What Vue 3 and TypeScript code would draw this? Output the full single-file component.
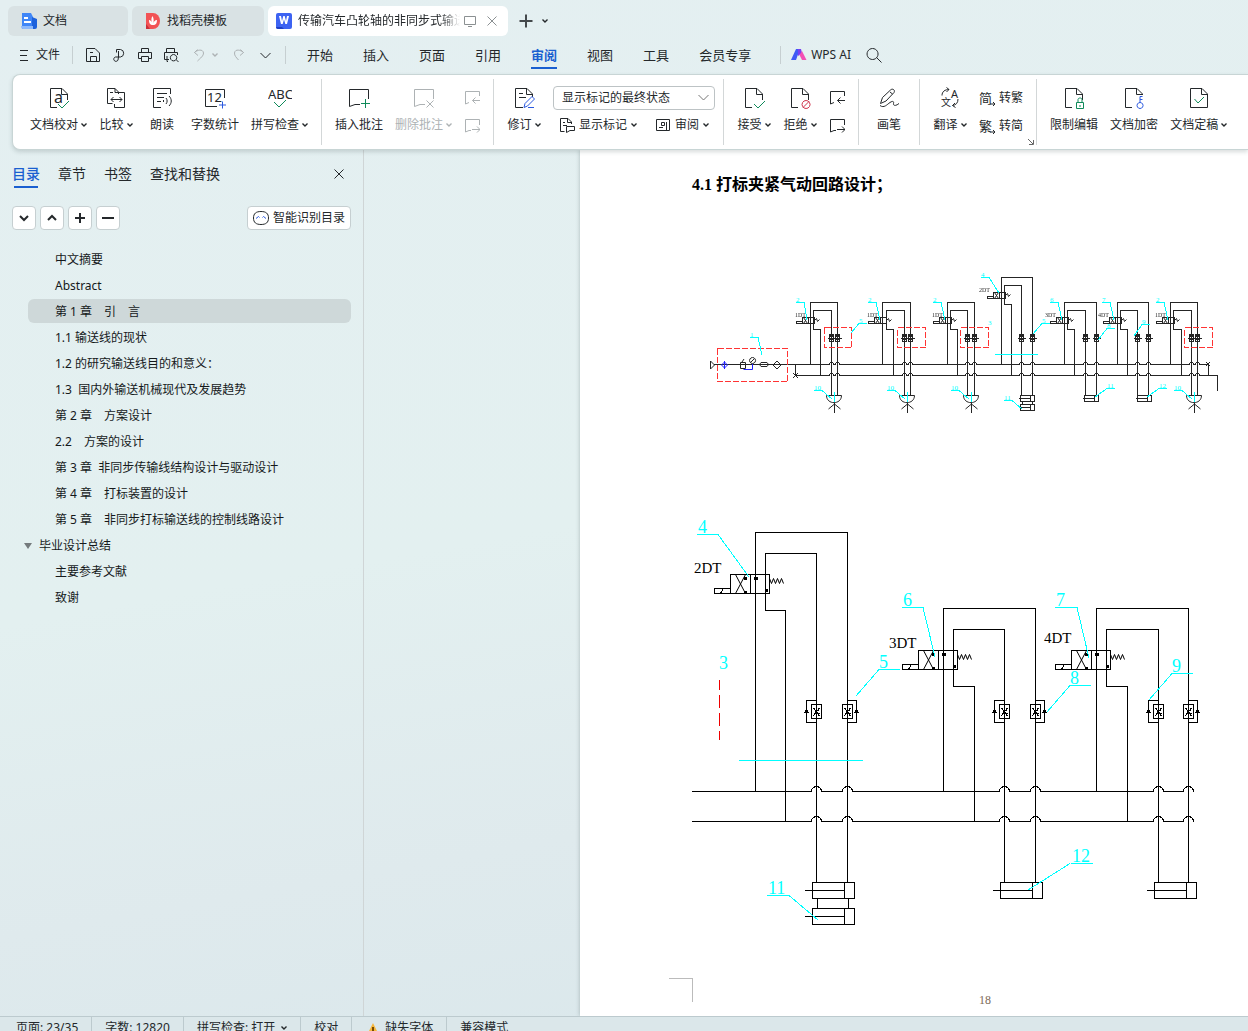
<script setup lang="ts">
import { h, ref } from 'vue'

interface Shape {
  d?: string
  text?: string
  x?: number
  y?: number
  size?: number
  color?: string
  fill?: string
  width?: number
}

const green = '#0f8a5a'
const blue = '#2b59e0'
const red = '#d0344c'
const doc = 'M10 21.5H3.5V2.5H15L20.5 8V14M14.5 2.5V8.5H20.5'

const icons: Record<string, Shape[]> = {
  proof: [{ d: doc }, { text: 'a', x: 7, y: 17, size: 16 }, { d: 'M11 18l4 4 7-7', color: green }],
  compare: [
    { d: 'M8.500 17.500H3.500V2.500H11L14.500 6V8M11 2.500V6.500H20.500V21.500H10.500V18' },
    { d: 'M6 6.500h3M7 13.500H18M9.500 11L7 13.500 9.500 16M15.500 11l2.500 2.500-2.500 2.500' },
  ],
  read: [
    { d: 'M11 21.500H3.500V2.500H20.500V8M7 7.500h10M7 11.500h7M7 15.500h4' },
    { d: 'M13.500 14v2M16 12c1.500 2 1.500 4 0 6M19 10c3 3 3 7 0 10' },
  ],
  count: [
    { d: 'M14 20.500H2.500V3.500H21.500V12' },
    { text: '12', x: 4, y: 16, size: 13 },
    { d: 'M19.500 15.500v7M16 19h7', color: blue },
  ],
  abc: [{ text: 'ABC', x: 0, y: 13, size: 13 }, { d: 'M6 16l5 5 7-7', color: green }],
  comment: [{ d: 'M13 18.500H8L2.500 20.500V3.500H21.500V13' }, { d: 'M18.500 13v9M14 17.500h9', color: green }],
  uncomment: [{ d: 'M13 18.500H8L2.500 20.500V3.500H21.500V13M14.500 14.500l7 7M21.500 14.500l-7 7' }],
  prev: [{ d: 'M5 12.500L1.500 14V1.500H15.500V6M16 10.500H8.500M11.500 7.500l-3 3 3 3' }],
  next: [{ d: 'M7 12.500H5L1.500 14V1.500H15.500V7M8 11.500H16M13 8.500l3 3-3 3' }],
  revise: [
    { d: 'M11 21.500H3.500V2.500H15L20.500 8V11M14.500 2.500V8.500H20.500M7 7.500h4M7 11.500h7' },
    { d: 'M12 21.500l1-4 7-7 2.500 2.500-7 7zM16 21.500h6', color: blue },
  ],
  marks: [
    { d: 'M5.500 14.500H1.500V1.500H9L12.500 5V7M8.500 1.500V5.500H12.500M4 5.500h2M4 8.500h4' },
    { d: 'M7.500 9.500H15.500V13.500H11L7.500 15.500z' },
  ],
  pane: [{ d: 'M1.500 2.500H14.500V13.500H1.500zM11.500 5V13.500M6.500 5.500h3v3h-3zM4 10.500h4' }],
  accept: [{ d: doc }, { d: 'M12 18l4 4 7-7', color: green }],
  reject: [{ d: doc }, { d: 'M18 14.500a4 4 0 1 0 .1 0zM15 21.500l6-6', color: red }],
  pen: [
    { d: 'M3.500 17.500l2-6L13.500 4c2-2 5 0 3.500 2.500L9 15zM13 6l2.500 2' },
    { d: 'M3 19.500c4 3 7-1 10-3s4-1 3.500 1 2 3 5.500 0' },
  ],
  translate: [
    { text: 'A', x: 13, y: 12, size: 11 },
    { text: '文', x: 3, y: 20, size: 10 },
    { d: 'M4 9.500c0-4 3-6 7-6M8.500 1.500l2.500 2-2.500 2.500M20 13c0 4-2 6-5.500 6.500M17 17l-2.500 2.500 3 2' },
  ],
  toFan: [{ text: '简', x: 0, y: 13, size: 13 }, { d: 'M11 14h5M14 12l2 2-2 2' }],
  toJian: [{ text: '繁', x: 0, y: 13, size: 13 }, { d: 'M11 14h5M14 12l2 2-2 2' }],
  lock: [{ d: doc }, { d: 'M14.500 16.500h7v6h-7zM16 16.500v-3c0-2 4-2 4 0v3M18 19v2', color: green }],
  key: [{ d: doc.replace('V14', 'V9') }, { d: 'M18 16.500a3 3 0 1 0 .1 0zM18 16.500v-6h2.500M18 13.500h2.500', color: blue }],
  final: [{ d: 'M3.500 2.500H15L20.500 8V21.500H3.500zM14.500 2.500V8.500H20.500' }, { d: 'M7.500 13l3.500 4 6-6', color: green }],
  menu: [{ d: 'M4 3.500h8M4 8.500h7M4 13.500h8' }],
  save: [{ d: 'M1.500 1.500H10L14.500 6V14.500H1.500zM5.500 14V9.500H11.500V14M5 5.500h3' }],
  share: [{ d: 'M5.500 5.500V2.500H9.500a3.800 3.800 0 0 1 0 7.500H7.500V4M7.500 10H4.500a2.200 2.200 0 1 0 2.500 3l.500-3' }],
  print: [{ d: 'M4.500 5V1.500H11.500V5M4.500 11.500H1.500V5.500H14.500V11.500H11.500M4.500 9.500H11.500V14.500H4.500z' }],
  preview: [
    { d: 'M3.500 5V1.500H11.500V5M6 12.500H1.500V5.500H14.500V8M5 14.500H4V9' },
    { d: 'M10.500 7.500a3.200 3.200 0 1 0 .1 0zM13 12.500l2.500 2.500' },
  ],
  undo: [{ d: 'M6.500 2.500L3.500 5.500l3.500 3M3.500 5.500C6 3 12 1.500 12.500 6c0 3-3 5-6 8' }],
  redo: [{ d: 'M9.500 2.500l3 3-3.500 3M12.500 5.500C10 3 4 1.500 3.500 6c0 3 1.500 4 4 7' }],
  down: [{ d: 'M3.500 6l5 5 5-5' }],
  search: [{ d: 'M6.500 1.500a5.500 5.500 0 1 0 .1 0zM10.500 10.500l5 5' }],
  monitor: [{ d: 'M2.500 3.500H13.500V11.500H2.500zM6 13.500H10' }],
  close: [{ d: 'M3.500 3.500l9 9M12.500 3.500l-9 9' }],
  plus: [{ d: 'M8 1.500v13M1.500 8h13', width: 2 }],
  treeDown: [{ d: 'M4 6l4 4 4-4', width: 2 }],
  treeUp: [{ d: 'M4 10l4-4 4 4', width: 2 }],
  treePlus: [{ d: 'M8 3v10M3 8h10', width: 2 }],
  treeMinus: [{ d: 'M2 8h12', width: 2 }],
  smart: [
    { d: 'M8 1.500c5 0 7.500 2 7.500 6.500S13 14.500 8 14.500.500 12.500.500 8 3 1.500 8 1.500z' },
    { d: 'M3 8.500l2.500-2 1 1M9.500 7.500l1-1 2.500 2', color: blue },
  ],
  docs: [
    { d: 'M1 0H10L12 4V16H1z', fill: '#3f86f7', color: 'none' },
    { d: 'M11 4l5 2V14q0 2-2 2H11z', fill: '#1d62dc', color: 'none' },
    { d: 'M0 13H12V16H2q-2 0-2-3z', fill: '#8db9fb', color: 'none' },
    { d: 'M3 5h4M3 9h7', color: '#fff', width: 2 },
  ],
  docer: [
    { d: 'M1 0H8a7 8 0 0 1 0 16H4L1 13z', fill: '#f25355', color: 'none' },
    { d: 'M1 11l4 5H1z', fill: '#c92f39', color: 'none' },
    { d: 'M4 7c0 3 1 5 4 5s4-2 4-5c-2 0-3 1-4 4 1-3 1-5-.500-8C6 5 6 8 7.500 11 6.500 8 5.500 7 4 7z', fill: '#fff', color: 'none' },
  ],
  writer: [
    { d: 'M2 0H14q2 0 2 2V14q0 2-2 2H2q-2 0-2-2V2q0-2 2-2z', fill: '#3d63f2', color: 'none' },
    { d: 'M0 14H6L8 16H2q-2 0-2-2z', fill: '#1e3fc4', color: 'none' },
    { d: 'M3 3H5L6 8 7.300 3H8.700L10 8 11 3H13L11 11H9.300L8 6.500 6.700 11H5z', fill: '#fff', color: 'none' },
  ],
  ai: [
    { d: 'M5 2H9L5 13H0z', fill: '#3f5af5', color: 'none' },
    { d: 'M7 2H10L11 6 7 9z', fill: '#7b3ff0', color: 'none' },
    { d: 'M11 4l4.500 9H11L8.500 8z', fill: '#f34fb4', color: 'none' },
  ],
  warn: [
    { d: 'M8 3l6 12H2z', fill: '#f6b73c', color: 'none' },
    { d: 'M8 7v4M8 12v1', color: '#7a4a00', width: 2 },
  ],
  corner: [{ d: 'M1 1l5 5M6.500 2V6.500H2' }],
}

const Icon = (props: { name: string; size?: number }) => {
  const s = props.size ?? 16
  return h(
    'svg',
    { width: s, height: s, viewBox: `0 0 ${s} ${s}`, fill: 'none', 'aria-hidden': 'true', style: { flex: 'none', display: 'block' } },
    icons[props.name].map((p) =>
      p.d
        ? h('path', { d: p.d, stroke: p.color ?? 'currentColor', fill: p.fill ?? 'none', 'stroke-width': p.width ?? 1 })
        : h('text', { x: p.x, y: p.y, 'font-size': p.size, fill: 'currentColor' }, p.text),
    ),
  )
}
Icon.props = ['name', 'size']

const Chev = () =>
  h('svg', { width: 6, height: 6, viewBox: '0 0 6 6', fill: 'none', 'aria-hidden': 'true', style: { flex: 'none' } }, [
    h('path', { d: 'M.5 1.500l2.500 2.500L5.500 1.500', stroke: 'currentColor', 'stroke-width': 1.4 }),
  ])

const menus = ['开始', '插入', '页面', '引用', '审阅', '视图', '工具', '会员专享']
const activeMenu = ref('审阅')

interface Tool { icon: string; label: string; drop?: boolean; off?: boolean }
const proofTools: Tool[] = [
  { icon: 'proof', label: '文档校对', drop: true },
  { icon: 'compare', label: '比较', drop: true },
  { icon: 'read', label: '朗读' },
  { icon: 'count', label: '字数统计' },
  { icon: 'abc', label: '拼写检查', drop: true },
]
const commentTools: Tool[] = [
  { icon: 'comment', label: '插入批注' },
  { icon: 'uncomment', label: '删除批注', drop: true, off: true },
]
const changeTools: Tool[] = [
  { icon: 'accept', label: '接受', drop: true },
  { icon: 'reject', label: '拒绝', drop: true },
]
const protectTools: Tool[] = [
  { icon: 'lock', label: '限制编辑' },
  { icon: 'key', label: '文档加密' },
  { icon: 'final', label: '文档定稿', drop: true },
]

const panes = ['目录', '章节', '书签', '查找和替换']
const activePane = ref('目录')
const treeTools = [
  { icon: 'treeDown', label: '展开' },
  { icon: 'treeUp', label: '收起' },
  { icon: 'treePlus', label: '添加' },
  { icon: 'treeMinus', label: '移除' },
]
const outline = [
  '中文摘要',
  'Abstract',
  '第 1 章　引　言',
  '1.1 输送线的现状',
  '1.2 的研究输送线目的和意义：',
  '1.3  国内外输送机械现代及发展趋势',
  '第 2 章　方案设计',
  '2.2　方案的设计',
  '第 3 章  非同步传输线结构设计与驱动设计',
  '第 4 章　打标装置的设计',
  '第 5 章　非同步打标输送线的控制线路设计',
  '毕业设计总结',
  '主要参考文献',
  '致谢',
]
const selected = ref(2)
const parentRow = 11

/* Enlarged circuit: one entry per directional valve branch */
const branches = [
  { x: 755.5, top: 532.5, inner: 61, back: 20, label: '2DT', lx: 694, ly: 573 },
  { x: 943.5, top: 608.5, inner: 61, back: 21, label: '3DT', lx: 889, ly: 648 },
  { x: 1096.5, top: 608.5, inner: 62, back: 21, label: '4DT', lx: 1044, ly: 643 },
]
const cylinders = [
  [812.5, 882.5], [812.5, 908.5], [1000.5, 882.5], [1154.5, 882.5],
]
const leaders = [
  { n: '4', x: 698, y: 534.5, end: '749 577', from: 718 },
  { n: '5', x: 879, y: 669.5, end: '856 696', from: 879 },
  { n: '6', x: 903, y: 607.5, end: '935 657', from: 923 },
  { n: '7', x: 1056, y: 607.5, end: '1089 658', from: 1077 },
  { n: '8', x: 1070, y: 685.5, end: '1047 712', from: 1070 },
  { n: '9', x: 1172, y: 673.5, end: '1149 700', from: 1172 },
  { n: '11', x: 768, y: 895.5, end: '818 920', from: 789 },
  { n: '12', x: 1072, y: 863.5, end: '1028 890', from: 1070 },
]
const hops = [816.5, 847.5, 1004.5, 1035.5, 1158.5, 1188.5]
const bus = (y: number) => `M692 ${y}` + hops.map((x) => `H${x - 5}a5 5 0 0 1 10 0`).join('')

/* Overview circuit: outer pair, inner pair, return pipe, label position */
const small = [
  { a: 810.5, b: 837.5, c: 813.5, d: 831.5, e: 820.5, t: 302.5, label: '1DT', lx: 795 },
  { a: 882.5, b: 910.5, c: 886.5, d: 904.5, e: 893.5, t: 302.5, label: '1DT', lx: 867 },
  { a: 947.5, b: 974.5, c: 950.5, d: 967.5, e: 957.5, t: 302.5, label: '1DT', lx: 932 },
  { a: 1001.5, b: 1032.5, c: 1004.5, d: 1021.5, e: 1011.5, t: 277.5, label: '2DT', lx: 979 },
  { a: 1064.5, b: 1096.5, c: 1067.5, d: 1085.5, e: 1074.5, t: 302.5, label: '3DT', lx: 1045 },
  { a: 1117.5, b: 1148.5, c: 1120.5, d: 1137.5, e: 1127.5, t: 302.5, label: '4DT', lx: 1098 },
  { a: 1170.5, b: 1197.5, c: 1173.5, d: 1191.5, e: 1181.5, t: 302.5, label: '1DT', lx: 1155 },
]
const smallHops = small.flatMap((u) => [u.d, u.b])
const smallBus = (y: number, from: number, to: number) =>
  `M${from} ${y}` + smallHops.map((x) => `H${x - 2}a2 2 0 0 1 4 0`).join('') + `H${to}`
const cups = [834.5, 907.5, 971.5, 1194.5]
const dashed = [
  [717.5, 348.5, 70, 33], [824.5, 327.5, 27, 20], [897.5, 327.5, 28, 20], [960.5, 327.5, 28, 20], [1184.5, 327.5, 28, 20],
]
const smallCylinders = [[1020.5, 395.5], [1020.5, 404.5], [1084.5, 395.5], [1137.5, 395.5]]
const smallLeaders = [
  { n: '1', x: 750, y: 337.5, end: '762 355', right: true },
  { n: '2', x: 796, y: 302.5, end: '807 320', right: true },
  { n: '2', x: 868, y: 302.5, end: '880 320', right: true },
  { n: '2', x: 933, y: 302.5, end: '945 320', right: true },
  { n: '4', x: 981, y: 277.5, end: '999 293', right: true },
  { n: '6', x: 1050, y: 302.5, end: '1062 320', right: true },
  { n: '7', x: 1102, y: 302.5, end: '1114 320', right: true },
  { n: '2', x: 1156, y: 302.5, end: '1168 320', right: true },
  { n: '5', x: 859, y: 323.5, end: '851 333', right: false },
  { n: '5', x: 1042, y: 323.5, end: '1033 334', right: false },
  { n: '8', x: 1107, y: 328.5, end: '1098 340', right: false },
  { n: '9', x: 1142, y: 324.5, end: '1134 336', right: false },
  { n: '10', x: 814, y: 390.5, end: '832 399', right: true },
  { n: '10', x: 887, y: 390.5, end: '905 399', right: true },
  { n: '10', x: 951, y: 390.5, end: '969 399', right: true },
  { n: '11', x: 1004, y: 400.5, end: '1022 409', right: true },
  { n: '11', x: 1107, y: 388.5, end: '1095 397', right: false },
  { n: '12', x: 1159, y: 388.5, end: '1147 397', right: false },
  { n: '10', x: 1174, y: 390.5, end: '1192 399', right: true },
]
</script>

<template>
  <div class="app">
    <nav class="tabs" aria-label="文档标签">
      <button class="tab home"><Icon name="docs" />文档</button>
      <button class="tab store"><Icon name="docer" />找稻壳模板</button>
      <div class="tab current">
        <Icon name="writer" />
        <span class="title">传输汽车凸轮轴的非同步式输送</span>
        <Icon name="monitor" class="dim" />
        <button class="bare dim" aria-label="关闭标签"><Icon name="close" /></button>
      </div>
      <button class="bare new" aria-label="新建"><Icon name="plus" /></button>
      <button class="bare" aria-label="标签列表"><Chev /></button>
    </nav>

    <div class="menubar">
      <button class="bare file"><Icon name="menu" />文件</button>
      <i class="rule"></i>
      <div class="quick">
        <button class="bare" aria-label="保存"><Icon name="save" /></button>
        <button class="bare" aria-label="分享"><Icon name="share" /></button>
        <button class="bare" aria-label="打印"><Icon name="print" /></button>
        <button class="bare" aria-label="打印预览"><Icon name="preview" /></button>
        <button class="bare off undo" aria-label="撤销"><Icon name="undo" /><Chev /></button>
        <button class="bare off redo" aria-label="恢复"><Icon name="redo" /></button>
        <button class="bare" aria-label="更多"><Icon name="down" /></button>
      </div>
      <i class="rule"></i>
      <div class="menus">
        <button v-for="m in menus" :key="m" class="bare menu" :class="{ on: m === activeMenu }" @click="activeMenu = m">{{ m }}</button>
      </div>
      <i class="rule"></i>
      <button class="bare ai"><Icon name="ai" />WPS AI</button>
      <button class="bare" aria-label="搜索"><Icon name="search" /></button>
    </div>

    <section class="ribbon" aria-label="审阅">
      <button v-for="t in proofTools" :key="t.label" class="tool">
        <Icon :name="t.icon" :size="24" /><span>{{ t.label }}<Chev v-if="t.drop" /></span>
      </button>
      <i class="sep"></i>
      <button v-for="t in commentTools" :key="t.label" class="tool" :class="{ off: t.off }">
        <Icon :name="t.icon" :size="24" /><span>{{ t.label }}<Chev v-if="t.drop" /></span>
      </button>
      <div class="stack off">
        <button class="bare" aria-label="上一条批注"><Icon name="prev" /></button>
        <button class="bare" aria-label="下一条批注"><Icon name="next" /></button>
      </div>
      <i class="sep"></i>
      <button class="tool"><Icon name="revise" :size="24" /><span>修订<Chev /></span></button>
      <div class="marking">
        <div class="picker">
          <select aria-label="修订显示状态"><option>显示标记的最终状态</option></select>
          <Icon name="down" class="arrow" />
        </div>
        <div class="line">
          <button class="bare mini"><Icon name="marks" />显示标记<Chev /></button>
          <button class="bare mini"><Icon name="pane" />审阅<Chev /></button>
        </div>
      </div>
      <i class="sep near"></i>
      <button v-for="t in changeTools" :key="t.label" class="tool">
        <Icon :name="t.icon" :size="24" /><span>{{ t.label }}<Chev v-if="t.drop" /></span>
      </button>
      <div class="stack">
        <button class="bare" aria-label="上一条修订"><Icon name="prev" /></button>
        <button class="bare" aria-label="下一条修订"><Icon name="next" /></button>
      </div>
      <i class="sep"></i>
      <button class="tool"><Icon name="pen" :size="24" /><span>画笔</span></button>
      <i class="sep"></i>
      <button class="tool"><Icon name="translate" :size="24" /><span>翻译<Chev /></span></button>
      <div class="stack convert">
        <button class="bare"><Icon name="toFan" />转繁</button>
        <button class="bare"><Icon name="toJian" />转简</button>
        <button class="bare launcher" aria-label="更多选项"><Icon name="corner" :size="8" /></button>
      </div>
      <i class="sep"></i>
      <button v-for="t in protectTools" :key="t.label" class="tool">
        <Icon :name="t.icon" :size="24" /><span>{{ t.label }}<Chev v-if="t.drop" /></span>
      </button>
    </section>

    <main class="work">
      <aside class="side">
        <div class="panes">
          <button v-for="p in panes" :key="p" class="bare pane" :class="{ on: p === activePane }" @click="activePane = p">{{ p }}</button>
          <button class="bare shut" aria-label="关闭窗格"><Icon name="close" /></button>
        </div>
        <div class="treebar">
          <button v-for="t in treeTools" :key="t.icon" class="box" :aria-label="t.label"><Icon :name="t.icon" /></button>
          <button class="box smart"><Icon name="smart" />智能识别目录</button>
        </div>
        <ul class="tree">
          <li v-for="(item, i) in outline" :key="i">
            <button class="node" :class="{ on: i === selected, parent: i === parentRow }" @click="selected = i">
              <i v-if="i === parentRow" class="twist"></i>{{ item }}
            </button>
          </li>
        </ul>
      </aside>

      <div class="canvas">
        <article class="sheet">
          <h1>4.1 打标夹紧气动回路设计；</h1>

          <svg class="plan overview" viewBox="708 272 512 144" width="512" height="144" role="img" aria-label="气动回路总图">
            <g class="ink">
              <path :d="smallBus(364.5, 714, 1208)" />
              <path :d="smallBus(375.5, 796, 1217.5) + 'V391'" />
              <path d="M795.500 364V375M793 373l5 5M798 373l-5 5M1208 364V375M1206 362l4 4M1210 362l-4 4" />
              <path d="M710.500 361v8l4-4zM777 361l4 4-4 4-4-4zM761 362.500h6q3 2 0 4h-6q-3-2 0-4zM740.500 362.500h5v6h-5zM742 362l2-3M752.500 357.500a3 3 0 1 0 .1 0zM751 362l3-3" class="soft" />
              <g v-for="u in small" :key="u.a">
                <path :d="`M${u.a} 364V${u.t}H${u.b}V396M${u.c} ${u.t + 27}V${u.t + 8}H${u.d}V396M${u.c} ${u.t + 27}H${u.e}V375`" />
                <path :d="`M${u.a - 8} ${u.t + 15}h12v6h-12zM${u.a - 2} ${u.t + 15}v6M${u.a - 14} ${u.t + 19}h6v2h-6z`" />
                <path class="soft" :d="`M${u.a - 7} ${u.t + 15}l4 6M${u.a - 3} ${u.t + 15}l-4 6M${u.a + 4} ${u.t + 18}l2-2 1 3 2-2`" />
                <path v-for="v in [u.d, u.b]" :key="v" :d="`M${v - 2} 334h4v7h-4zM${v - 2} 335l4 5M${v + 2} 335l-4 5M${v - 4} 338h8`" />
                <text :x="u.lx" :y="u.t + 14" font-size="6">{{ u.label }}</text>
              </g>
              <path v-for="c in cups" :key="c" class="soft" :d="`M${c - 8} 395.500H${c + 7}C${c + 7} 405 ${c - 8} 405 ${c - 8} 395.500M${c} 403V413M${c} 404l-6 5M${c} 404l6 5`" />
              <path v-for="(c, i) in smallCylinders" :key="i" :d="`M${c[0]} ${c[1]}h14v6h-14zM${c[0] + 10} ${c[1]}v6M${c[0] - 2} ${c[1] + 3}h12`" />
              <path d="M1022.500 401V405M1032.500 401V405" />
            </g>
            <path class="navy" d="M743.500 369.500H752.500V364M724.500 361V369M721.500 365l3-3 3 3-3 3z" />
            <rect v-for="(r, i) in dashed" :key="i" class="dash" :x="r[0]" :y="r[1]" :width="r[2]" :height="r[3]" />
            <g class="aqua">
              <path d="M995 354.500H1038" />
              <path v-for="c in cups" :key="c" :d="`M${c} 392V402`" />
              <g v-for="(l, i) in smallLeaders" :key="i">
                <path :d="`M${l.x} ${l.y}h8M${l.right ? l.x + 8 : l.x} ${l.y}L${l.end}`" />
                <text :x="l.x" :y="l.y - 1" font-size="7">{{ l.n }}</text>
              </g>
              <text x="988" y="325" font-size="7">3</text>
            </g>
          </svg>

          <svg class="plan detail" viewBox="692 516 512 412" width="512" height="412" role="img" aria-label="气动回路局部放大图">
            <g class="ink">
              <path :d="bus(791.5)" />
              <path :d="bus(821.5)" />
              <g v-for="b in branches" :key="b.x">
                <path :d="`M${b.x} 791V${b.top}h92V882M${b.x + 10} ${b.top + 78}V${b.top + 21}h${b.inner - 10}V882M${b.x + 10} ${b.top + 78}h${b.back}V821`" />
                <path :d="`M${b.x - 25} ${b.top + 42}h39v19h-39zM${b.x - 5} ${b.top + 42}v19`" />
                <path :d="`M${b.x - 41} ${b.top + 56}h16v5h-16zM${b.x - 35} ${b.top + 61}l3-5`" />
                <path class="soft" :d="`M${b.x - 20} ${b.top + 42}l10 19M${b.x - 10} ${b.top + 42}l-10 19M${b.x + 14} ${b.top + 46}l2 5 2-5 2 5 2-5 2 5 2-5 2 5`" />
                <path class="mark" :d="`M${b.x - 2} ${b.top + 44}h4v3h-4zM${b.x + 9} ${b.top + 56}h3v3h-3zM${b.x - 12} ${b.top + 44}h3v3h-3zM${b.x - 12} ${b.top + 58}h3v3h-3z`" />
                <path :d="`M${b.x + b.inner} 700.500h-10v22h10M${b.x + 92} 700.500h9v22h-9`" />
                <path v-for="v in [b.x + b.inner, b.x + 92]" :key="v" :d="`M${v - 5} 704.500h10v14h-10zM${v - 3} 708l6 8M${v + 3} 708l-6 8M${v - 3} 713h6M${v - 2} 710h4`" />
                <path class="mark" :d="`M${b.x + b.inner - 13} 713l3-4 3 4zM${b.x + 98} 713l3-4 3 4z`" />
                <text :x="b.lx" :y="b.ly" font-size="15">{{ b.label }}</text>
              </g>
              <path v-for="(c, i) in cylinders" :key="i" :d="`M${c[0]} ${c[1]}h42v16h-42zM${c[0] + 32} ${c[1]}v16M${c[0] - 8} ${c[1] + 8}h40`" />
              <path d="M817.500 898V908M848.500 898V908" />
            </g>
            <path class="alert" d="M719.500 680V690M719.500 695V708M719.500 713V726M719.500 731V740" />
            <g class="aqua">
              <path d="M739 760.500H863" />
              <g v-for="l in leaders" :key="l.n">
                <path :d="`M${l.x - 1} ${l.y}h22M${l.from} ${l.y}L${l.end}`" />
                <text :x="l.x" :y="l.y - 2" font-size="18">{{ l.n }}</text>
              </g>
              <text x="719" y="669" font-size="18">3</text>
            </g>
          </svg>

          <footer class="foot"><i class="crop"></i><span>18</span></footer>
        </article>
      </div>
    </main>

    <footer class="status">
      <span>页面: 23/35</span>
      <span>字数: 12820</span>
      <button class="bare">拼写检查: 打开<Chev /></button>
      <button class="bare">校对</button>
      <button class="bare missing"><Icon name="warn" />缺失字体</button>
      <span>兼容模式</span>
    </footer>
  </div>
</template>

<style>
body { margin: 0; }
</style>

<style scoped>
.app {
  display: flex;
  flex-direction: column;
  height: 100vh;
  overflow: hidden;
  background: linear-gradient(170deg, #e4eff1 0%, #e3f0f0 50%, #dfeaed 75%, #d9e7eb 100%);
  color: #24282b;
  font: 12px/16px "Noto Sans", "Noto Sans CJK SC", sans-serif;
}
button, select { font: inherit; color: inherit; margin: 0; }
.bare {
  display: flex;
  align-items: center;
  flex: none;
  padding: 0;
  border: 0;
  background: none;
  white-space: nowrap;
}
.off { color: #adb2b4; }
.dim { color: #8b9092; }

.tabs { display: flex; align-items: center; gap: 4px; height: 30px; padding: 6px 8px 5px; flex: none; }
.tab {
  display: flex;
  align-items: center;
  gap: 6px;
  box-sizing: border-box;
  height: 30px;
  padding: 0 13px;
  border: 0;
  border-radius: 6px;
  background: #d9e2e4;
}
.home { width: 120px; }
.store { width: 132px; }
.current { width: 240px; padding: 0 8px; background: #fff; }
.title {
  flex: 1;
  margin-right: -4px;
  overflow: hidden;
  white-space: nowrap;
  mask-image: linear-gradient(to right, #000 88%, transparent);
}
.new { margin: 0 4px 0 6px; color: #44494c; }

.menubar { display: flex; align-items: center; height: 28px; padding: 0 16px; margin-bottom: 5px; flex: none; }
.file { gap: 4px; }
.rule { width: 1px; height: 18px; margin: 0 12px; background: #c6cfd1; flex: none; }
.quick { display: flex; align-items: center; gap: 10px; }
.undo { gap: 5px; padding-left: 2px; }
.redo { padding-left: 3px; }
.menus { display: flex; gap: 30px; padding: 0 17px 0 9px; }
.menu { position: relative; height: 28px; font-size: 13px; line-height: 28px; }
.menu.on { color: #1a5fd0; font-weight: 700; }
.menu.on::after {
  content: "";
  position: absolute;
  left: 0;
  right: 0;
  bottom: 0;
  height: 2px;
  background: #1a5fd0;
}
.ai { gap: 4px; margin: 0 15px 0 -2px; }

.ribbon {
  position: relative;
  z-index: 1;
  display: flex;
  align-items: flex-start;
  gap: 12px;
  flex: none;
  box-sizing: border-box;
  height: 76px;
  margin-left: 12px;
  padding: 11px 0 0 17px;
  border: 1px solid #c8d5d5;
  border-right: 0;
  border-radius: 8px 0 0 8px;
  background: #fff;
  box-shadow: 0 2px 4px rgba(60, 80, 80, .2);
}
.tool {
  display: flex;
  flex-direction: column;
  align-items: center;
  gap: 7px;
  min-width: 34px;
  flex: none;
  padding: 0;
  border: 0;
  background: none;
  white-space: nowrap;
}
.tool.off { color: #adb2b4; }
.tool span, .mini { display: flex; align-items: center; gap: 3px; }
.sep { width: 1px; height: 66px; margin: -7px 1px 0; background: #d3d7d8; flex: none; }
.near { margin-left: -4px; }
.stack { display: flex; flex-direction: column; gap: 12px; padding-top: 4px; }
.convert .bare { gap: 4px; }
.convert { position: relative; }
.convert .launcher { position: absolute; right: -12px; top: 52px; color: #666; }
.marking { display: flex; flex-direction: column; gap: 7px; width: 162px; flex: none; }
.picker { position: relative; }
.picker select {
  display: block;
  width: 100%;
  height: 24px;
  padding: 0 8px;
  border: 1px solid #bdc3c5;
  border-radius: 4px;
  background: #fff;
  appearance: none;
}
.arrow { position: absolute; right: 4px; top: 3px; pointer-events: none; color: #777; }
.line { display: flex; justify-content: space-between; padding: 0 6px; }
.mini { gap: 4px; }

.work { display: flex; flex: 1; min-height: 0; }
.side { box-sizing: border-box; width: 364px; flex: none; border-right: 1px solid #cfd5d6; padding: 10px 12px 0; }
.panes { display: flex; align-items: center; gap: 18px; height: 28px; font-size: 14px; }
.pane { position: relative; height: 28px; }
.pane.on { color: #1a5fd0; font-weight: 500; }
.pane.on::after {
  content: "";
  position: absolute;
  left: 2px;
  right: 2px;
  bottom: 0;
  height: 2px;
  background: #1a5fd0;
}
.shut { margin-left: auto; padding-right: 4px; }
.treebar { display: flex; gap: 4px; margin-top: 18px; }
.box {
  display: flex;
  align-items: center;
  justify-content: center;
  gap: 4px;
  box-sizing: border-box;
  width: 24px;
  height: 24px;
  padding: 0;
  border: 1px solid #c6cfd1;
  border-radius: 4px;
  background: #fff;
}
.smart { width: 104px; margin-left: auto; white-space: nowrap; }
.tree { margin: 16px 0 0; padding: 0 0 0 16px; list-style: none; }
.tree li { padding: 1px 0; }
.node {
  display: flex;
  align-items: center;
  box-sizing: border-box;
  width: 100%;
  height: 24px;
  padding: 2px 0 0 27px;
  border: 0;
  border-radius: 6px;
  background: none;
  white-space: pre;
  color: #15191b;
}
.node.on { background: #ced8d9; }
.node.parent { gap: 7px; padding-left: 0; margin-left: -4px; }
.twist { width: 0; border: 4px solid transparent; border-top: 6px solid #757b7d; border-bottom: 0; }

.canvas { display: flex; flex: 1; min-width: 0; padding-left: 216px; }
.sheet {
  flex: 1;
  min-width: 0;
  padding: 23px 0 0 112px;
  background: #fff;
  box-shadow: 0 0 4px rgba(60, 80, 80, .35);
  clip-path: inset(0 0 0 -6px);
}
h1 {
  margin: 0;
  color: #000;
  font: bold 16px/24px "Liberation Serif", "Noto Sans CJK SC", serif;
  white-space: nowrap;
}
.plan { display: block; shape-rendering: crispEdges; font-family: "Liberation Serif", serif; }
.overview { margin: 75px 0 0 16px; }
.detail { margin-top: 100px; }
.ink path { fill: none; stroke: #000; }
.ink text { fill: #000; }
.ink .soft { shape-rendering: auto; }
.ink .mark { fill: #000; stroke: none; }
.aqua path { fill: none; stroke: #0ff; }
.aqua text { fill: #0ff; }
.navy { fill: none; stroke: #22f; shape-rendering: auto; }
.dash { fill: none; stroke: #f33; stroke-dasharray: 6 2; }
.alert { stroke: #e00; }
.overview .ink { opacity: .85; }
.foot { display: flex; margin: 50px 0 0 -23px; }
.crop { width: 23px; height: 23px; border: solid #bbb; border-width: 1px 1px 0 0; }
.foot span { padding: 15px 0 0 286px; color: #7c6a58; font: 12px/14px "Liberation Serif", serif; }

.status {
  display: flex;
  align-items: flex-start;
  flex: none;
  height: 14px;
  overflow: hidden;
  padding-left: 3px;
  border-top: 1px solid #bccace;
  background: #dbe7ea;
}
.status > * { padding: 3px 13px 0; }
.status > * + * { border-left: 1px solid #bccace; }
.status .bare { gap: 6px; }
.status .missing { gap: 4px; }
</style>
